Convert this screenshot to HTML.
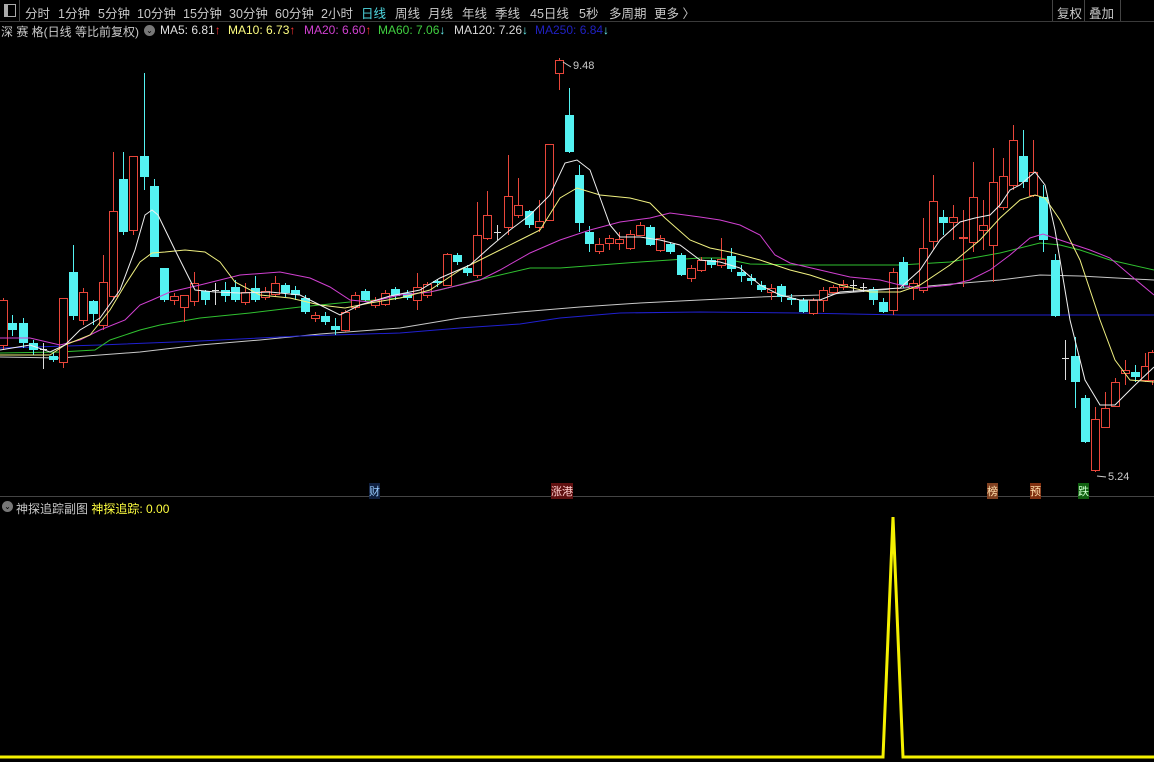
<!DOCTYPE html>
<html><head><meta charset="utf-8">
<style>
html,body{margin:0;padding:0;background:#000;width:1154px;height:762px;overflow:hidden;font-family:"Liberation Sans","Noto Sans CJK SC",sans-serif;}
#top{position:absolute;left:0;top:0;width:1154px;height:21px;border-bottom:1px solid #3a3a3a;color:#c8c8c8;font-size:12.5px;}
#top span{position:absolute;top:3px;white-space:nowrap}
.lg{position:absolute;top:23px;font-size:12px;white-space:nowrap}
svg{position:absolute;left:0;top:0}
</style></head><body>
<div id="top">
<div style="position:absolute;left:4px;top:4px;width:10px;height:11px;border:1px solid #aaa;"><div style="width:3px;height:11px;background:#aaa"></div></div>
<div style="position:absolute;left:19px;top:0;width:1px;height:21px;background:#444"></div>
<span style="left:25px">分时</span><span style="left:58px">1分钟</span><span style="left:98px">5分钟</span><span style="left:137px">10分钟</span><span style="left:183px">15分钟</span><span style="left:229px">30分钟</span><span style="left:275px">60分钟</span><span style="left:321px">2小时</span>
<span style="left:361px;color:#4fd8e0">日线</span><span style="left:395px">周线</span><span style="left:428px">月线</span><span style="left:462px">年线</span><span style="left:495px">季线</span><span style="left:530px">45日线</span><span style="left:579px">5秒</span><span style="left:609px">多周期</span><span style="left:654px">更多 〉</span>
<div style="position:absolute;left:1052px;top:0;width:1px;height:21px;background:#444"></div>
<span style="left:1057px">复权</span>
<div style="position:absolute;left:1084px;top:0;width:1px;height:21px;background:#444"></div>
<span style="left:1089px">叠加</span>
<div style="position:absolute;left:1120px;top:0;width:1px;height:21px;background:#444"></div>
</div>
<div class="lg" style="left:1px;color:#c8c8c8">深 赛 格(日线 等比前复权)</div>
<div style="position:absolute;left:144px;top:25px;width:11px;height:11px;border-radius:50%;background:#777;color:#000;font-size:8px;line-height:11px;text-align:center">⌄</div>
<div class="lg" style="left:160px;color:#e0e0e0">MA5: 6.81<b style="color:#f33;font-weight:normal">↑</b></div>
<div class="lg" style="left:228px;color:#ffff80">MA10: 6.73<b style="color:#f33;font-weight:normal">↑</b></div>
<div class="lg" style="left:304px;color:#d040d0">MA20: 6.60<b style="color:#f33;font-weight:normal">↑</b></div>
<div class="lg" style="left:378px;color:#40d040">MA60: 7.06<b style="color:#6ee;font-weight:normal">↓</b></div>
<div class="lg" style="left:454px;color:#d8d8d8">MA120: 7.26<b style="color:#6ee;font-weight:normal">↓</b></div>
<div class="lg" style="left:535px;color:#2020c0">MA250: 6.84<b style="color:#6ee;font-weight:normal">↓</b></div>
<svg id="s" width="1154" height="762"></svg>
<div style="position:absolute;left:2px;top:501px;width:11px;height:11px;border-radius:50%;background:#777;color:#000;font-size:8px;line-height:11px;text-align:center">⌄</div>
<div class="lg" style="top:500px;left:16px;color:#c8c8c8">神探追踪副图 <span style="color:#ffff40">神探追踪: 0.00</span></div>
<div class="lg" style="top:483px;left:369px;font-size:11px;color:#9cf;background:#102040">财</div>
<div class="lg" style="top:483px;left:551px;font-size:11px;color:#fcc;background:#601010">涨港</div>
<div class="lg" style="top:483px;left:987px;font-size:11px;color:#fda;background:#804020">榜</div>
<div class="lg" style="top:483px;left:1030px;font-size:11px;color:#fda;background:#803010">预</div>
<div class="lg" style="top:483px;left:1078px;font-size:11px;color:#cfc;background:#106010">跌</div>
<div class="lg" style="top:60px;left:573px;font-size:11px;color:#ccc">9.48</div>
<div class="lg" style="top:471px;left:1108px;font-size:11px;color:#ccc">5.24</div>
<script>
var C=[[3,298,300,345,350,'r'],[12,315,323,330,336,'c'],[23,318,323,343,348,'c'],[33,340,343,350,355,'c'],[43,343,349,349,369,'w'],[53,352,356,360,362,'c'],[63,298,298,362,368,'r'],[73,245,272,316,320,'c'],[83,288,292,320,325,'r'],[93,300,301,314,325,'c'],[103,255,282,325,330,'r'],[113,152,211,296,300,'r'],[123,152,179,232,235,'c'],[133,156,156,230,235,'r'],[144,73,156,177,190,'c'],[154,179,186,257,257,'c'],[164,268,268,300,302,'c'],[174,293,296,300,305,'r'],[184,295,295,307,322,'r'],[194,272,283,301,306,'r'],[205,290,291,300,305,'c'],[215,283,290,290,305,'w'],[225,282,290,296,302,'c'],
[235,280,287,300,302,'c'],[245,283,292,302,305,'r'],[255,276,288,300,302,'c'],[265,287,291,297,300,'r'],[275,276,283,294,296,'r'],[285,283,285,293,297,'c'],[295,286,290,295,300,'c'],[305,295,298,312,314,'c'],[315,312,315,318,322,'r'],[325,312,316,322,325,'c'],[335,318,326,330,335,'c'],[345,310,312,330,332,'r'],[355,292,295,307,310,'r'],[365,289,291,300,302,'c'],[375,297,300,305,308,'r'],[385,290,293,304,306,'r'],[395,287,289,296,300,'c'],
[407,290,293,298,300,'c'],[417,273,287,300,310,'r'],[427,282,284,295,298,'r'],[437,279,281,283,287,'c'],[447,253,254,285,286,'r'],[457,253,255,262,265,'c'],[467,265,268,273,276,'c'],[477,202,235,275,278,'r'],[487,191,215,238,240,'r'],[497,225,232,232,240,'w'],[508,155,196,227,235,'r'],[518,178,205,215,218,'r'],[529,210,211,225,228,'c'],[539,200,221,227,232,'r'],[549,144,144,220,221,'r'],[559,58,60,73,90,'r'],[569,88,115,152,153,'c'],[579,165,175,223,232,'c'],[589,226,232,244,252,'c'],[599,238,244,251,254,'r'],[609,235,238,243,250,'r'],[619,232,239,243,250,'r'],[630,230,234,248,250,'r'],[640,222,225,235,236,'r'],[650,225,227,245,246,'c'],[660,235,238,250,252,'r'],[670,242,244,252,254,'c'],[681,253,255,275,276,'c'],[691,265,268,278,282,'r'],[701,257,260,270,272,'r'],[711,258,260,265,268,'c'],[721,238,259,265,268,'r'],[731,248,256,269,272,'c'],[741,265,272,276,282,'c'],[751,274,278,281,285,'c'],[761,281,285,290,292,'c'],[771,284,288,292,300,'r'],[781,284,286,297,302,'c'],[791,294,298,300,305,'c'],
[803,298,300,312,313,'c'],[813,298,300,313,315,'r'],[823,287,290,300,312,'r'],[833,285,287,292,295,'r'],[843,280,284,287,290,'r'],[853,280,285,285,292,'w'],[863,283,287,287,292,'w'],[873,287,289,300,305,'c'],[883,298,302,312,313,'c'],[893,268,272,310,315,'r'],[903,257,262,285,288,'c'],[913,280,283,288,300,'r'],[923,218,248,290,293,'r'],[933,175,201,241,250,'r'],[943,210,217,223,235,'c'],[953,205,217,222,240,'r'],[963,210,237,238,287,'r'],[973,162,197,242,252,'r'],[983,200,225,230,250,'r'],[993,148,182,245,282,'r'],[1003,158,176,207,210,'r'],[1013,125,140,185,190,'r'],[1023,130,156,182,188,'c'],[1033,140,172,195,197,'r'],[1043,185,197,240,252,'c'],[1055,254,260,316,317,'c'],[1065,340,358,358,380,'w'],[1075,337,356,382,408,'c'],[1085,395,398,442,443,'c'],[1095,407,419,470,472,'r'],[1105,392,408,427,428,'r'],[1115,378,382,406,407,'r'],[1125,360,370,373,385,'r'],[1135,365,372,377,382,'c'],[1145,353,366,380,382,'r'],[1152,350,352,380,385,'r']];
var h='';
C.forEach(function(d){var x=d[0],col=d[5]=='r'?'#e8463a':d[5]=='c'?'#54f2f2':'#ddd';
h+='<line x1="'+(x+.5)+'" y1="'+d[1]+'" x2="'+(x+.5)+'" y2="'+d[4]+'" stroke="'+col+'"/>';
if(d[5]=='w'){h+='<line x1="'+(x-3)+'" y1="'+(d[2]+.5)+'" x2="'+(x+4)+'" y2="'+(d[2]+.5)+'" stroke="#ddd"/>';}
else if(d[5]=='r'){h+='<rect x="'+(x-3.5)+'" y="'+(d[2]+.5)+'" width="8" height="'+Math.max(1,d[3]-d[2])+'" fill="#000" stroke="'+col+'"/>';}
else{h+='<rect x="'+(x-4)+'" y="'+d[2]+'" width="9" height="'+Math.max(2,d[3]-d[2])+'" fill="'+col+'"/>';}});
function pl(s,c){return '<polyline fill="none" stroke="'+c+'" stroke-width="1" points="'+s+'"/>';}
h=pl("0,357 60,358 140,352 200,345 260,340 320,334 400,328 460,318 520,312 580,307 640,303 700,300 760,297 820,295 880,290 940,285 1000,280 1040,275 1080,276 1154,280","#c8c8c8")+
pl("0,348 100,345 200,341 300,336 400,333 460,328 520,324 560,318 620,313 700,312 800,313 900,315 1000,315 1154,315","#2020d0")+
pl("0,353 60,352 95,350 110,340 140,330 160,325 200,318 250,313 300,307 350,302 400,298 440,290 470,282 500,275 530,268 560,268 600,265 640,262 670,260 700,258 720,258 750,264 800,265 850,265 900,265 950,262 1000,253 1040,243 1060,245 1080,250 1110,260 1154,270","#30c030")+h+
pl("0,338 30,338 60,345 80,340 100,330 125,320 140,305 152,300 170,292 200,285 240,275 280,272 310,278 330,287 350,300 370,302 400,295 430,292 460,285 480,280 500,270 530,253 560,240 590,230 620,222 650,218 670,213 700,217 720,220 740,225 760,235 775,255 790,263 820,270 850,277 880,280 900,285 920,288 950,285 970,280 990,270 1010,255 1030,238 1043,234 1060,240 1090,250 1110,258 1130,275 1154,295","#d040d0")+
pl("0,355 50,355 65,345 90,335 110,310 125,285 140,262 152,253 165,252 185,250 205,252 220,262 235,282 260,295 290,298 320,305 345,308 370,303 400,298 430,290 460,270 480,260 500,250 520,240 540,230 560,198 577,188 600,195 630,198 650,203 665,218 690,240 710,248 730,252 760,260 790,270 810,275 840,285 870,292 900,292 920,285 950,265 980,240 1000,218 1020,200 1035,195 1045,198 1060,220 1080,260 1100,320 1115,360 1130,380 1154,382","#f0f080")+
pl("0,350 30,345 50,352 65,345 80,330 100,318 120,290 135,250 145,215 152,210 158,215 175,250 195,290 215,292 240,293 270,292 300,295 320,305 340,315 360,305 390,296 420,290 440,278 470,265 490,247 510,230 530,215 550,195 565,163 577,160 590,170 610,225 620,237 640,237 660,240 680,245 700,260 720,262 740,268 760,285 780,295 800,300 820,300 840,292 870,290 900,288 920,270 940,240 960,222 975,218 990,215 1000,205 1010,190 1020,185 1035,172 1045,185 1055,230 1070,320 1085,380 1100,405 1115,405 1135,385 1154,367","#f0f0f0")+
'<polyline fill="none" stroke="#ccc" points="563,62 571,67"/><polyline fill="none" stroke="#ccc" points="1097,476 1106,477"/>'+
'<line x1="0" y1="496.5" x2="1154" y2="496.5" stroke="#444"/>'+
'<polyline fill="none" stroke="#f5f000" stroke-width="3" points="0,757 883,757 893,517 903,757 1154,757"/>';
document.getElementById('s').innerHTML=h;
</script>
</body></html>
